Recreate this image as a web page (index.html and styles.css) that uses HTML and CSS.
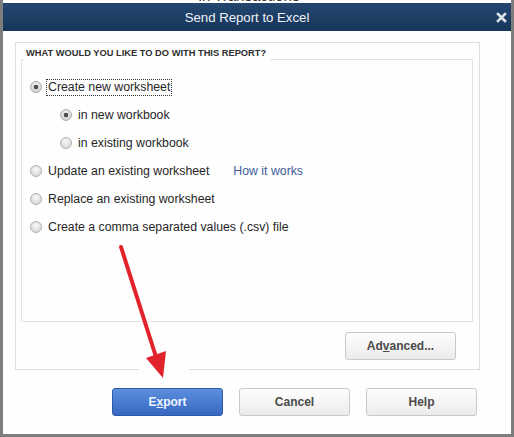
FILE: index.html
```html
<!DOCTYPE html>
<html lang="en">
  <head>
    <meta charset="UTF-8" />
    <meta name="viewport" content="width=device-width, initial-scale=1.0" />
    <title>Send Report to Excel</title>
    <link rel="stylesheet" href="styles.css">
  </head>
  <body>
    <div class="window">
      <div class="behind"><span>in Transactions</span></div>
      <div class="titlebar">
        <span class="title">Send Report to Excel</span>
        <span class="close">
          <svg width="11" height="11" viewBox="0 0 11 11">
            <path d="M2 2 L9 9 M9 2 L2 9" stroke="#dfe4ea" stroke-width="2.6" stroke-linecap="square" />
          </svg>
        </span>
      </div>
      <div class="content">
        <div class="group">
          <fieldset class="choices">
            <legend>What would you like to do with this report?</legend>
            <div class="option">
              <span class="radio checked"></span>
              <span class="label focus">Create new worksheet</span>
            </div>
            <div class="option sub">
              <span class="radio checked"></span>
              <span class="label">in new workbook</span>
            </div>
            <div class="option sub">
              <span class="radio"></span>
              <span class="label">in existing workbook</span>
            </div>
            <div class="option">
              <span class="radio"></span>
              <span class="label">Update an existing worksheet</span>
              <a class="how">How it works</a>
            </div>
            <div class="option">
              <span class="radio"></span>
              <span class="label">Replace an existing worksheet</span>
            </div>
            <div class="option">
              <span class="radio"></span>
              <span class="label">Create a comma separated values (.csv) file</span>
            </div>
          </fieldset>
          <div class="advanced-row">
            <button class="btn">Ad<u>v</u>anced...</button>
          </div>
        </div>
        <div class="actions">
          <button class="btn primary">E<u>x</u>port</button>
          <button class="btn">Cancel</button>
          <button class="btn">Help</button>
        </div>
      </div>

      <!-- red pointer drawn over the dialog -->
      <svg class="arrow" width="514" height="437" viewBox="0 0 514 437">
        <rect x="139" y="367" width="50" height="4" fill="#ffffff" />
        <line x1="121" y1="247" x2="157" y2="360" stroke="#e3232b" stroke-width="4" stroke-linecap="round" />
        <polygon points="146,358 166,351 163,378" fill="#e3232b" />
      </svg>
    </div>
  </body>
</html>
```

FILE: styles.css
```css
* {
  box-sizing: border-box;
}
body {
  margin: 0;
  background-color: #ffffff;
  font-family: "Liberation Sans", Arial, sans-serif;
}
.window {
  position: relative;
  width: 514px;
  height: 437px;
  border: 3px solid #7d7d7d;
  border-top: none;
  background-color: #fefefe;
}
.behind {
  display: flex;
  justify-content: center;
  align-items: flex-end;
  height: 3px;
  overflow: hidden;
}
.behind span {
  font-size: 15px;
  line-height: 15px;
  color: #333;
  margin-left: -16px;
}
.titlebar {
  display: grid;
  grid-template-columns: 1fr auto 1fr;
  align-items: center;
  height: 28px;
  background: linear-gradient(#234670, #183659);
}
.title {
  grid-column: 2;
  margin-right: 20px;
  font-size: 13.2px;
  color: #eef2f7;
}
.close {
  grid-column: 3;
  justify-self: end;
  display: flex;
  margin-right: 4px;
}
.content {
  padding: 11px 0 0 12px;
}
.group {
  width: 465px;
  height: 328px;
  border: 1px solid #dedede;
  padding: 5px 6px 9px 5px;
}
.choices {
  margin: 0;
  height: 274px;
  padding: 3px 0 0 8px;
  border: 1px solid #e3e3e3;
}
.choices legend {
  margin-left: -6px;
  padding: 0 4px 11px 2px;
  font-size: 9.3px;
  line-height: 11px;
  font-weight: bold;
  text-transform: uppercase;
  color: #2e2e2e;
}
.option {
  display: flex;
  align-items: center;
  height: 28px;
  font-size: 12.3px;
  color: #262626;
}
.option.sub {
  padding-left: 30px;
}
.radio {
  width: 12px;
  height: 12px;
  margin-right: 4px;
  border-radius: 50%;
  border: 1px solid #b0b0b0;
  background: radial-gradient(circle at 50% 35%, #f8f8f8, #cfcfcf);
}
.radio.checked {
  background: radial-gradient(circle, #4f4f4f 0 2px, transparent 2.6px),
    radial-gradient(circle at 50% 35%, #f4f4f4, #c6c6c6);
}
.label {
  padding: 0 1px;
  line-height: 15px;
  border: 1px dotted transparent;
}
.label.focus {
  border-color: #333;
}
.how {
  margin-left: 22px;
  color: #3f5d99;
}
.advanced-row {
  display: flex;
  justify-content: flex-end;
  margin-top: 10px;
  padding-right: 17px;
}
.btn {
  width: 111px;
  height: 28px;
  padding: 0;
  border: 1px solid #c9c9c9;
  border-radius: 3px;
  background: linear-gradient(#fefefe, #ebebeb);
  font-family: "Liberation Sans", Arial, sans-serif;
  font-size: 12px;
  font-weight: bold;
  color: #4b4b4b;
}
.btn.primary {
  border-color: #2c5aa6;
  background: linear-gradient(#5c8fdd, #3868c2);
  color: #eef3ff;
}
.actions {
  display: flex;
  justify-content: flex-end;
  gap: 16px;
  margin-top: 18px;
  padding-right: 34px;
}
.arrow {
  position: absolute;
  left: -3px;
  top: 0;
  pointer-events: none;
}
```
